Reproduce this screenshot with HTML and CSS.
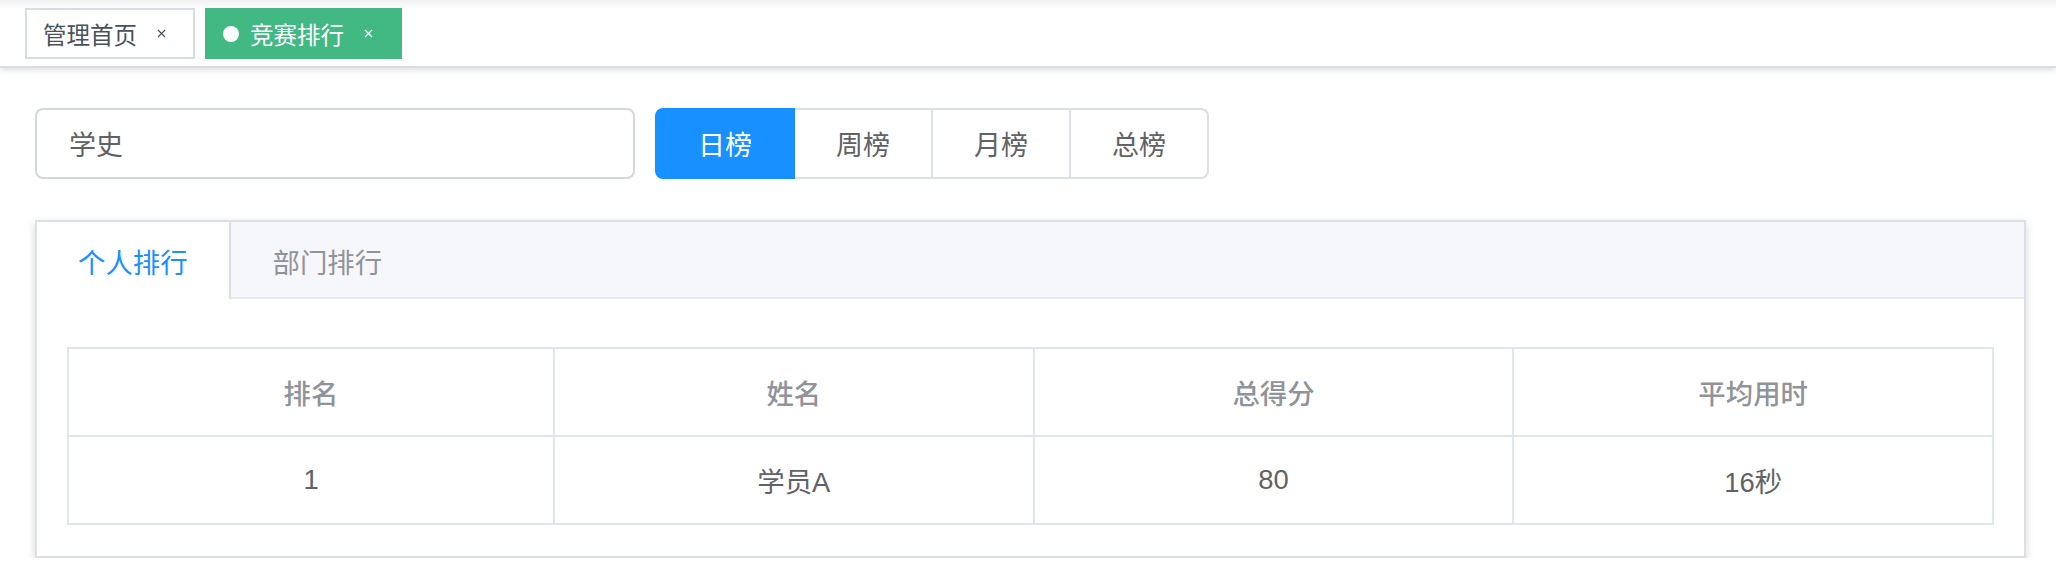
FILE: index.html
```html
<!DOCTYPE html>
<html lang="zh-CN">

<head>
    <meta charset="UTF-8">
    <meta name="viewport" content="width=device-width, initial-scale=1.0">
    <link rel="stylesheet" href="styles.css">
    <title>竞赛排行</title>
</head>

<body>
    <div class="tags-view">
        <span class="tag">管理首页<span class="tag-close"><svg width="9" height="9" viewBox="0 0 9 9"><path d="M1 1L8 8M8 1L1 8" /></svg></span></span>
        <span class="tag active"><i class="dot"></i>竞赛排行<span class="tag-close"><svg width="9" height="9" viewBox="0 0 9 9"><path d="M1 1L8 8M8 1L1 8" /></svg></span></span>
    </div>

    <div class="app-container">
        <div class="filter-bar">
            <input type="text" class="search" value="学史">
            <div class="btn-group">
                <button class="active">日榜</button>
                <button>周榜</button>
                <button>月榜</button>
                <button>总榜</button>
            </div>
        </div>

        <div class="tab-card">
            <div class="tab-header">
                <div class="tab-item active">个人排行</div>
                <div class="tab-item">部门排行</div>
            </div>
            <div class="tab-content">
                <table class="rank-table">
                    <colgroup>
                        <col class="col-rank">
                        <col>
                        <col>
                        <col>
                    </colgroup>
                    <thead>
                        <tr>
                            <th>排名</th>
                            <th>姓名</th>
                            <th>总得分</th>
                            <th>平均用时</th>
                        </tr>
                    </thead>
                    <tbody>
                        <tr>
                            <td>1</td>
                            <td>学员A</td>
                            <td>80</td>
                            <td>16秒</td>
                        </tr>
                    </tbody>
                </table>
            </div>
        </div>
    </div>
</body>

</html>
```

FILE: styles.css
```css
body {
    font-family: 'Liberation Sans', 'Noto Sans CJK SC', sans-serif;
    background-color: #fff;
    margin: 0;
    padding: 0;
}

.tags-view {
    height: 66px;
    display: flex;
    align-items: flex-start;
    gap: 10px;
    padding-left: 25px;
    background: linear-gradient(to bottom, #eff0f2, #fff 9px);
    border-bottom: 2px solid #d8dce5;
    box-shadow: 0 2px 6px 0 rgba(0, 0, 0, 0.12), 0 0 6px 0 rgba(0, 0, 0, 0.04);
}

.tag {
    margin-top: 8px;
    height: 51px;
    box-sizing: border-box;
    display: flex;
    align-items: center;
    padding: 0 16px;
    border: 2px solid #d8dce5;
    background-color: #fff;
    color: #495060;
    font-size: 23.5px;
}

.tag.active {
    background-color: #42b983;
    border-color: #42b983;
    color: #fff;
}

.dot {
    width: 16px;
    height: 16px;
    border-radius: 50%;
    background-color: #fff;
    margin-right: 11px;
}

.tag-close {
    width: 31px;
    height: 31px;
    margin-left: 9px;
    display: flex;
    align-items: center;
    justify-content: center;
}

.tag-close svg path {
    stroke: currentColor;
    stroke-width: 1.2;
    fill: none;
}

.app-container {
    padding: 40px 30px 0 35px;
}

.filter-bar {
    display: flex;
    gap: 20px;
}

.search {
    width: 600px;
    height: 71px;
    box-sizing: border-box;
    border: 2px solid #d4d7de;
    border-radius: 8px;
    padding: 0 32px;
    font-family: inherit;
    font-size: 27px;
    color: #606266;
    outline: none;
}

.btn-group {
    display: flex;
}

.btn-group button {
    width: 140px;
    height: 71px;
    box-sizing: border-box;
    border: 2px solid #dcdfe6;
    margin-left: -2px;
    background-color: #fff;
    font-family: inherit;
    font-size: 27px;
    color: #606266;
    padding: 0;
}

.btn-group button:first-child {
    margin-left: 0;
    border-radius: 8px 0 0 8px;
}

.btn-group button:last-child {
    border-radius: 0 8px 8px 0;
}

.btn-group button.active {
    background-color: #1890ff;
    border-color: #1890ff;
    color: #fff;
    position: relative;
}

.tab-card {
    margin-top: 41px;
    border: 2px solid #dcdfe6;
    background-color: #fff;
    box-shadow: 0 4px 8px 0 rgba(0, 0, 0, 0.12), 0 0 12px 0 rgba(0, 0, 0, 0.04);
}

.tab-header {
    display: flex;
    height: 75px;
    background-color: #f5f7fa;
    border-bottom: 2px solid #e4e7ed;
}

.tab-item {
    height: 77px;
    box-sizing: border-box;
    padding: 0 40px;
    display: flex;
    align-items: center;
    font-size: 27.4px;
    color: #909399;
    border-right: 2px solid transparent;
    border-left: 2px solid transparent;
}

.tab-item.active {
    background-color: #fff;
    color: #1890ff;
    border-left: none;
    border-right-color: #dcdfe6;
    padding: 0 41px;
}

.tab-content {
    padding: 30px 30px 31px;
}

.rank-table {
    margin-top: 18px;
    width: 100%;
    table-layout: fixed;
    border-collapse: collapse;
    border: 2px solid #dfe6ec;
    font-size: 27.4px;
}

.col-rank {
    width: 486px;
}

.rank-table th,
.rank-table td {
    height: 86px;
    padding: 0;
    border: 2px solid #dfe6ec;
    text-align: center;
}

.rank-table th {
    color: #909399;
    font-weight: 500;
}

.rank-table td {
    color: #606266;
}
```
